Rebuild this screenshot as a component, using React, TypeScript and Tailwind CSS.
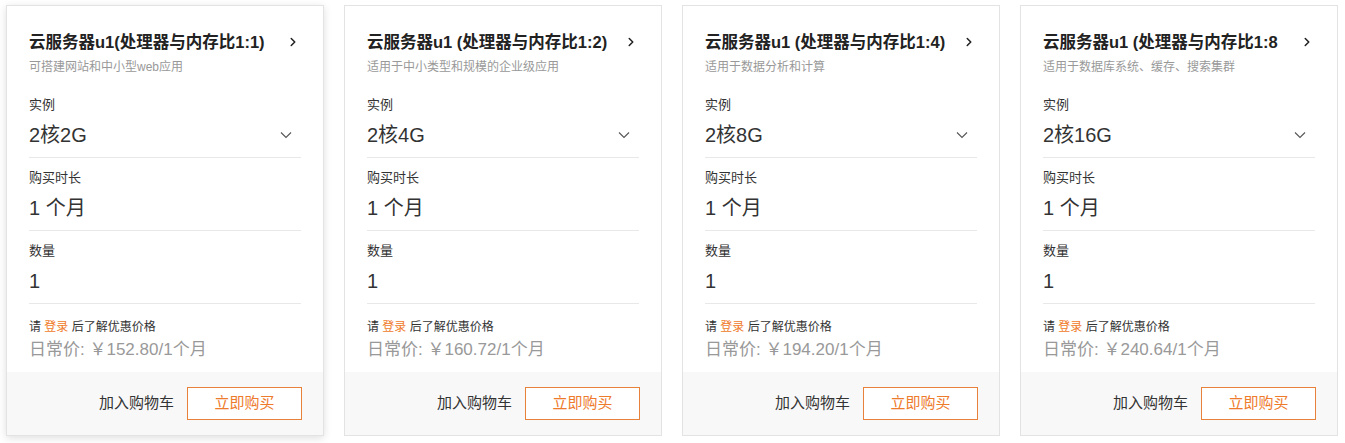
import { ChevronRight } from "lucide-react";

interface Plan {
	title: string;
	desc: string;
	spec: string;
	price: string;
}

const plans: Plan[] = [
	{ title: "云服务器u1(处理器与内存比1:1)", desc: "可搭建网站和中小型web应用", spec: "2核2G", price: "152.80" },
	{ title: "云服务器u1 (处理器与内存比1:2)", desc: "适用于中小类型和规模的企业级应用", spec: "2核4G", price: "160.72" },
	{ title: "云服务器u1 (处理器与内存比1:4)", desc: "适用于数据分析和计算", spec: "2核8G", price: "194.20" },
	{ title: "云服务器u1 (处理器与内存比1:8", desc: "适用于数据库系统、缓存、搜索集群", spec: "2核16G", price: "240.64" },
];

function Field({ label, value, select, first }: { label: string; value: string; select?: boolean; first?: boolean }) {
	return (
		<div className={`border-b border-[#e8e8e8] pt-[11px] pb-[8px] ${first ? "mt-[9px]" : ""}`}>
			<div className="text-[13px] leading-[18px] text-[#333]">{label}</div>
			<div className="mt-[7px] flex items-center justify-between">
				<span className="text-[20px] leading-[28px] text-[#333]">{value}</span>
				{select && (
					<svg width="14" height="14" viewBox="0 0 14 14" className="mr-[8px]">
						<polyline points="2,4.5 7,9.5 12,4.5" fill="none" stroke="#555" strokeWidth="1.1" />
					</svg>
				)}
			</div>
		</div>
	);
}

function PlanCard({ plan, hovered }: { plan: Plan; hovered?: boolean }) {
	return (
		<div
			className={`w-[318px] h-[431px] flex flex-col border border-[#e3e3e3] bg-white ${
				hovered ? "shadow-[0_2px_8px_rgba(0,0,0,0.13)]" : ""
			}`}
		>
			<div className="flex-1 px-[22px] pt-[25px]">
				<div className="flex items-center justify-between">
					<div className="max-w-[246px] overflow-hidden whitespace-nowrap text-[16.5px] leading-[22px] font-bold text-[#222]">
						{plan.title}
					</div>
					<ChevronRight size={14} strokeWidth={2.6} className="mr-[1px] text-[#222]" />
				</div>
				<div className="mt-[5px] text-[12px] leading-[18px] text-[#999]">{plan.desc}</div>
				<Field label="实例" value={plan.spec} select first />
				<Field label="购买时长" value="1 个月" />
				<Field label="数量" value="1" />
				<div className="mt-[14px] text-[12px] leading-[18px] text-[#333]">
					请 <span className="text-[#f07a2a]">登录</span> 后了解优惠价格
				</div>
				<div className="mt-[2px] text-[17px] leading-[24px] text-[#999]">
					日常价: ￥{plan.price}/1个月
				</div>
			</div>
			<div className="h-[63px] flex items-center justify-end gap-[13px] bg-[#f8f8f8] pr-[21px]">
				<span className="text-[15px] text-[#333]">加入购物车</span>
				<button
					type="button"
					className="w-[115px] h-[33px] border border-[#e8823a] bg-white text-[15px] text-[#ee7a2c]"
				>
					立即购买
				</button>
			</div>
		</div>
	);
}

export default function App() {
	return (
		<div
			className="w-[1345px] h-[443px] bg-white pl-[6px] pt-[5px]"
			style={{ fontFamily: '"Liberation Sans", "Noto Sans CJK SC", sans-serif' }}
		>
			<div className="flex gap-[20px]">
				{plans.map((p, i) => (
					<PlanCard key={p.spec} plan={p} hovered={i === 0} />
				))}
			</div>
		</div>
	);
}
